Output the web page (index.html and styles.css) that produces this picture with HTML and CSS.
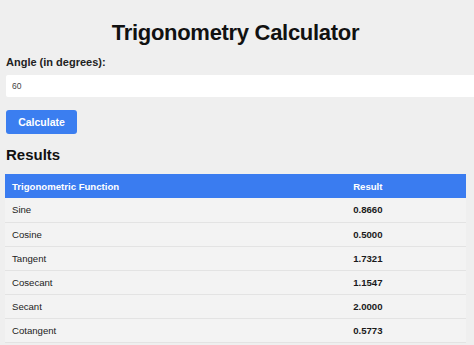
FILE: index.html
```html
<!DOCTYPE html>
<html lang="en">
<head>
<meta charset="utf-8">
<title>Trigonometry Calculator</title>
<link rel="stylesheet" href="styles.css">
</head>
<body>
<h1 class="title">Trigonometry Calculator</h1>
<form class="calc">
  <label class="label" for="angle">Angle (in degrees):</label>
  <input class="field" id="angle" type="text" value="60">
  <button class="btn" type="button">Calculate</button>
</form>
<h2 class="subtitle">Results</h2>
<table class="results">
  <thead>
    <tr><th class="col-fn">Trigonometric Function</th><th>Result</th></tr>
  </thead>
  <tbody>
    <tr><td>Sine</td><td class="val">0.8660</td></tr>
    <tr><td>Cosine</td><td class="val">0.5000</td></tr>
    <tr><td>Tangent</td><td class="val">1.7321</td></tr>
    <tr><td>Cosecant</td><td class="val">1.1547</td></tr>
    <tr><td>Secant</td><td class="val">2.0000</td></tr>
    <tr><td>Cotangent</td><td class="val">0.5773</td></tr>
  </tbody>
</table>
</body>
</html>
```
FILE: styles.css
```css
html {
  overflow: hidden;
  background: #efefef;
}
body {
  margin: 0;
  padding: 0 8px 0 5px;
  font-family: "Liberation Sans", Arial, sans-serif;
  color: #1a1a1a;
  background: #efefef;
}
.title {
  margin: 20px 0 0;
  font-size: 22px;
  line-height: 26px;
  font-weight: bold;
  text-align: center;
  letter-spacing: -0.3px;
  color: #111;
}
.calc {
  display: flex;
  flex-direction: column;
  align-items: flex-start;
  padding-left: 1px;
}
.label {
  display: block;
  margin-top: 10px;
  font-size: 11px;
  line-height: 13px;
  font-weight: bold;
  color: #222;
}
.field {
  box-sizing: border-box;
  margin-top: 6px;
  width: calc(100% + 20px);
  height: 22px;
  padding: 0 6px;
  border: none;
  border-radius: 2px;
  background: #fff;
  font-family: "Liberation Sans", Arial, sans-serif;
  font-size: 8.5px;
  color: #444;
}
.btn {
  margin-top: 13px;
  width: 71px;
  height: 24px;
  padding: 0;
  border: none;
  border-radius: 3px;
  background: #3b7ef0;
  color: #fff;
  font-family: "Liberation Sans", Arial, sans-serif;
  font-size: 10.5px;
  font-weight: bold;
}
.subtitle {
  margin: 12px 0 0;
  padding-left: 1px;
  font-size: 15px;
  line-height: 18px;
  font-weight: bold;
  color: #111;
}
.results {
  margin-top: 10px;
  width: 100%;
  border-collapse: collapse;
  font-size: 9.6px;
}
.results th {
  height: 24px;
  padding: 0 7px;
  background: #3a7cf0;
  color: #fff;
  text-align: left;
  font-weight: bold;
}
.results .col-fn {
  width: 74%;
}
.results td {
  box-sizing: border-box;
  height: 24px;
  padding: 0 7px;
  background: #f3f3f3;
  border-bottom: 1px solid #e3e3e3;
  color: #222;
}
.results .val {
  font-weight: bold;
  color: #1a1a1a;
}
```
